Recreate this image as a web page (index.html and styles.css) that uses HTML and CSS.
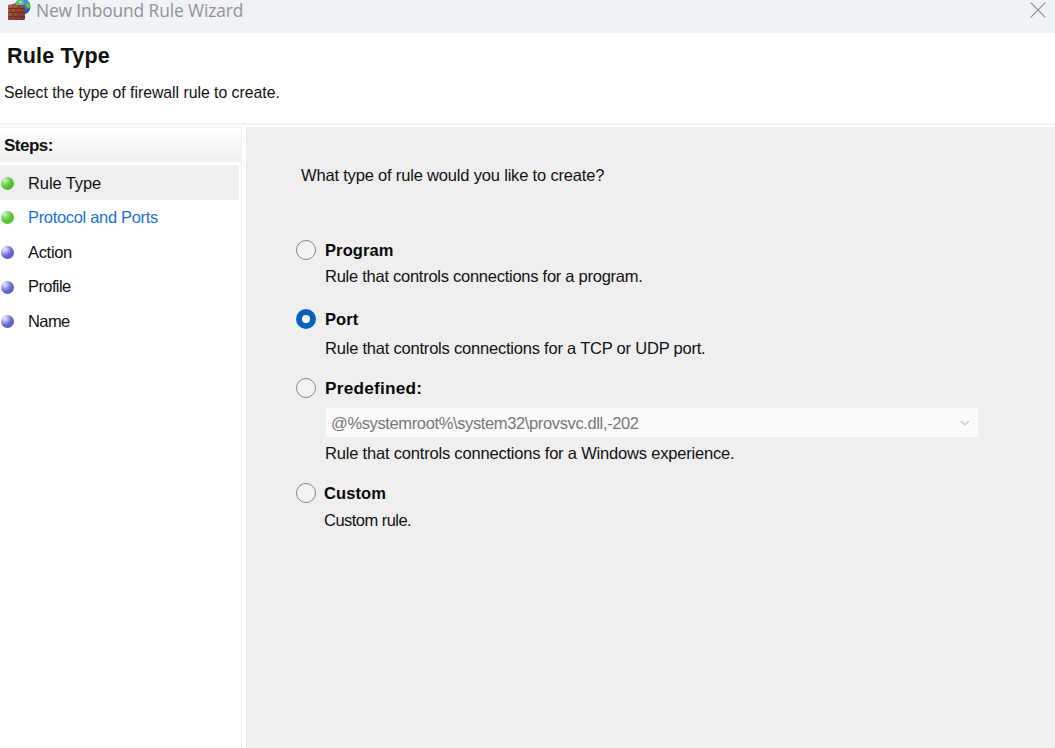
FILE: index.html
```html
<!DOCTYPE html>
<html lang="en">
<head>
<meta charset="utf-8">
<title>New Inbound Rule Wizard</title>
<link rel="stylesheet" href="styles.css">
</head>
<body>
<div class="window">
  <header class="titlebar">
    <svg class="app-icon" width="24" height="20" viewBox="0 0 24 20">
      <defs>
        <radialGradient id="globe" cx=".35" cy=".3" r=".8"><stop offset="0" stop-color="#72c7f3"/><stop offset=".6" stop-color="#2378cf"/><stop offset="1" stop-color="#17449c"/></radialGradient>
        <linearGradient id="brick" x2="1" y2="1"><stop offset="0" stop-color="#b66550"/><stop offset="1" stop-color="#7c3024"/></linearGradient>
      </defs>
      <circle cx="14.5" cy="6.5" r="8" fill="url(#globe)"/>
      <path d="M8 3Q11-1 14 0L13 3L11 5L8 5ZM18 0Q22 3 22 7L20 9L18 6L19 3Z" fill="#65c83b"/>
      <path d="M10 2L14 1L13 3Z" fill="#d9f5dc"/>
      <path d="M0 5L3 4V5L5 4L8 3V5H17V19L16 20H0Z" fill="url(#brick)"/>
      <path d="M0 8.500H17M0 12.500H17M0 16.500H17M5 4V8M11 5V8M3 9V12M8 9V12M14 9V12M5 13V16M11 13V16M3 17V20M8 17V20M14 17V20" stroke="#64291f" stroke-width=".8"/>
    </svg>
    <span class="window-title">New Inbound Rule Wizard</span>
    <svg class="close" width="16" height="16" viewBox="0 0 16 16"><path d="M.7.7L15.3 15.3M15.3.7L.7 15.3" stroke="#8a8d90" stroke-width="1.2"/></svg>
  </header>
  <section class="page-head">
    <h1>Rule Type</h1>
    <p>Select the type of firewall rule to create.</p>
  </section>
  <div class="body">
    <nav class="steps">
      <h2>Steps:</h2>
      <ul>
        <li class="current"><i class="dot green"></i><span>Rule Type</span></li>
        <li class="link"><i class="dot green"></i><span>Protocol and Ports</span></li>
        <li class="action"><i class="dot blue"></i><span>Action</span></li>
        <li class="tight"><i class="dot blue"></i><span>Profile</span></li>
        <li class="tight"><i class="dot blue"></i><span>Name</span></li>
      </ul>
    </nav>
    <main class="pane">
      <p class="question">What type of rule would you like to create?</p>
      <div class="option program"><i class="radio"></i><div><b>Program</b><p>Rule that controls connections for a program.</p></div></div>
      <div class="option port"><i class="radio checked"></i><div><b>Port</b><p>Rule that controls connections for a TCP or UDP port.</p></div></div>
      <div class="option predefined"><i class="radio"></i><div><b>Predefined:</b>
        <div class="select"><span>@%systemroot%\system32\provsvc.dll,-202</span><svg width="10" height="6" viewBox="0 0 10 6"><path d="M1 1L5 5L9 1" fill="none" stroke="#c4c4c4" stroke-width="1.2"/></svg></div>
        <p>Rule that controls connections for a Windows experience.</p></div></div>
      <div class="option custom"><i class="radio"></i><div><b>Custom</b><p>Custom rule.</p></div></div>
    </main>
  </div>
</div>
</body>
</html>
```
FILE: styles.css
```css
* { box-sizing: border-box; }
body, h1, h2, p, ul { margin: 0; padding: 0; }
body { background: #fff; color: #111; font: 16.5px/20px "Liberation Sans", Arial, sans-serif; overflow: hidden; }
.window { width: 1055px; height: 748px; display: flex; flex-direction: column; }
.titlebar { height: 33px; flex: none; background: #eff3f7; display: flex; align-items: flex-start; padding: 0 8px; }
.app-icon { flex: none; }
.window-title { font: 17.4px/20px "Open Sans", "Noto Sans", sans-serif; color: #909294; margin-left: 4px; flex: 1; letter-spacing: -.12px; white-space: nowrap; }
.close { margin: 2px 1px 0 0; }
.page-head { height: 92px; flex: none; border-bottom: 2px solid #f3f3f3; padding: 13px 0 0 4px; }
h1 { font-size: 21.5px; line-height: 20px; padding-left: 3px; letter-spacing: .2px; }
.page-head p { margin-top: 17px; font-size: 15.75px; letter-spacing: 0; }
.body { flex: 1; display: flex; padding-top: 2px; }
.steps { width: 242px; flex: none; border-right: 1px solid #f1f1f1; border-top: 1px solid #f1f1f1; }
.pane { flex: 1; margin-left: 4px; background: #efefef; padding: 38px 0 0 50px; }
h2 { height: 34px; padding: 8px 0 0 4px; font-size: 17px; line-height: 20px; letter-spacing: -.5px; background: linear-gradient(#fff, #f0f0f0); margin-bottom: 3px; }
ul { list-style: none; }
li { display: flex; align-items: center; height: 34.6px; width: 239px; padding-left: 1px; letter-spacing: -.32px; }
li span { margin-left: 14px; white-space: nowrap; }
.current { background: #efefef; letter-spacing: -.1px; }
.current span, .action span { padding-top: 1px; }
.link { color: #1a73d1; }
.tight { letter-spacing: -.6px; }
.dot { width: 13px; height: 13px; border-radius: 50%; margin-top: 2px; }
.green { background: radial-gradient(circle at 28% 25%, #d6f4cd 0, #8fdd78 25%, #55c834 50%, #4cbd2c 80%, #90d780 100%); }
.blue { background: radial-gradient(circle at 28% 25%, #e5edff 0, #a8b1e8 25%, #6a68cf 50%, #5b57c3 80%, #9999dc 100%); }
.question { padding-left: 5px; letter-spacing: -.18px; }
.option { display: flex; gap: 9px; letter-spacing: -.26px; }
.option b { display: block; color: #080808; letter-spacing: .1px; }
.radio { width: 20px; height: 20px; flex: none; border: 1.5px solid #868686; border-radius: 50%; background: #f4f4f4; }
.checked { border: 6px solid #0562b8; background: #fff; }
.program { margin-top: 55px; }
.program p { margin-top: 6px; }
.port { margin-top: 23px; }
.port p { margin-top: 9px; letter-spacing: -.21px; }
.predefined { margin-top: 20px; }
.predefined b { font-size: 17.2px; letter-spacing: .25px; }
.predefined p { letter-spacing: -.19px; }
.select { width: 652px; height: 29px; margin: 10px 0 6px 1px; padding: 0 8px 0 5px; display: flex; align-items: center; justify-content: space-between; background: #fafafa; color: #777; letter-spacing: -.37px; }
.custom { margin-top: 20px; gap: 8px; }
.custom p { margin-top: 7px; letter-spacing: -.53px; }
```
